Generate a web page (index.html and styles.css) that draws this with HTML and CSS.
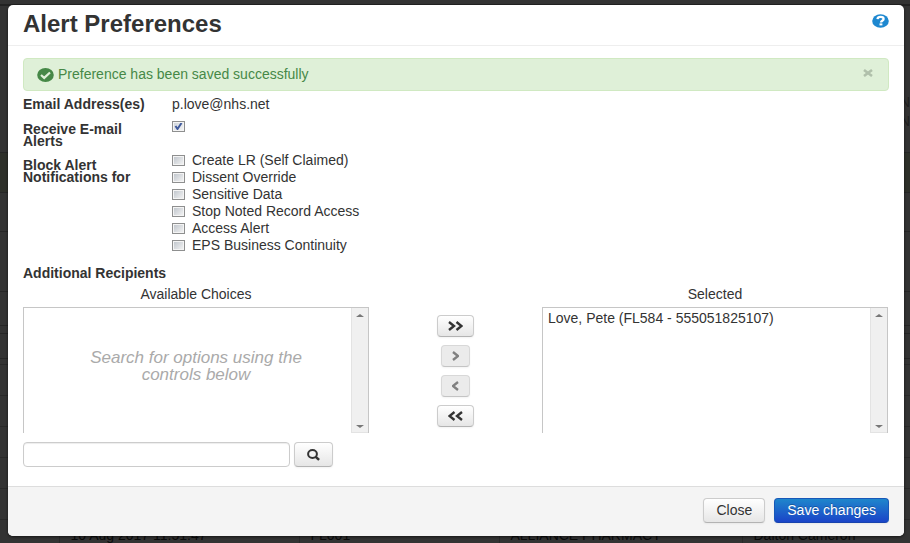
FILE: index.html
```html
<!DOCTYPE html>
<html lang="en">
<head>
  <meta charset="UTF-8">
  <meta name="viewport" content="width=device-width, initial-scale=1.0">
  <title>Alert Preferences</title>
  <link rel="stylesheet" href="styles.css">
</head>
<body>

  <!-- Page behind the dialog -->
  <div class="page-behind" aria-hidden="true">
    <div class="behind-top">
      <span>N</span>
      <span>N</span>
    </div>
    <div class="behind-notice"></div>
    <div class="behind-heading"></div>
    <div class="behind-filters"></div>
    <div class="behind-tabs"></div>
    <div class="behind-rule"></div>
    <div class="behind-tools"></div>
    <table class="alerts-table">
      <tr><td></td><td></td><td></td><td></td><td></td></tr>
      <tr><td></td><td></td><td></td><td></td><td></td></tr>
      <tr><td></td><td></td><td></td><td></td><td></td></tr>
      <tr><td></td><td></td><td></td><td></td><td></td></tr>
      <tr><td></td><td></td><td></td><td></td><td></td></tr>
      <tr>
        <td></td>
        <td>10 Aug 2017 11:51:47</td>
        <td>FL001</td>
        <td>ALLIANCE PHARMACY</td>
        <td>Dalton Cameron</td>
      </tr>
    </table>
  </div>

  <!-- Dialog -->
  <form class="modal" role="dialog" aria-labelledby="modal-title">
    <div class="modal-header">
      <h1 class="modal-title" id="modal-title">Alert Preferences</h1>
      <a class="help-link" href="#" aria-label="Help">
        <svg width="17" height="14" viewBox="0 0 17 14">
          <ellipse cx="8.5" cy="7" rx="8.3" ry="6.8" fill="#1e88d0"/>
          <path d="M5.5 5.2C5.700 3.500 7 2.900 8.600 2.900c1.700 0 3 .8 3 2.100 0 1.700-2.600 1.700-2.600 3.400" fill="none" stroke="#fff" stroke-width="2.300"/>
          <rect x="7.500" y="9.400" width="2.900" height="2" fill="#fff"/>
        </svg>
      </a>
    </div>

    <div class="modal-body">
      <div class="alert">
        <svg class="alert-icon" width="17" height="14" viewBox="0 0 17 14">
          <ellipse cx="8.5" cy="7" rx="8.3" ry="6.9" fill="#468847"/>
          <path d="M4 7l3.200 2.900L13 4.500" fill="none" stroke="#dff0d8" stroke-width="2.200"/>
        </svg>
        <span class="alert-text">Preference has been saved successfully</span>
        <button class="close" type="button" aria-label="Dismiss">
          <svg width="10" height="8" viewBox="0 0 10 8">
            <path d="M1 1l8 6M9 1L1 7" fill="none" stroke="#b0c0ab" stroke-width="2.600"/>
          </svg>
        </button>
      </div>

      <div class="field">
        <span class="field-label">Email Address(es)</span>
        <span class="field-value">p.love@nhs.net</span>
      </div>
      <div class="field">
        <label class="field-label" for="receive">Receive E-mail Alerts</label>
        <input class="check" type="checkbox" id="receive" checked>
      </div>
      <div class="field field-group" role="group" aria-labelledby="block-label">
        <span class="field-label" id="block-label">Block Alert Notifications for</span>
        <div class="options">
          <label class="option"><input class="check" type="checkbox">Create LR (Self Claimed)</label>
          <label class="option"><input class="check" type="checkbox">Dissent Override</label>
          <label class="option"><input class="check" type="checkbox">Sensitive Data</label>
          <label class="option"><input class="check" type="checkbox">Stop Noted Record Access</label>
          <label class="option"><input class="check" type="checkbox">Access Alert</label>
          <label class="option"><input class="check" type="checkbox">EPS Business Continuity</label>
        </div>
      </div>

      <h2 class="section-title">Additional Recipients</h2>
      <div class="picker">
        <div class="picker-col">
          <label class="picker-label" for="available">Available Choices</label>
          <div class="listbox">
            <select class="list" id="available" multiple></select>
            <div class="hint">Search for options using the controls below</div>
            <div class="scroll">
              <span class="arrow arrow-up"></span>
              <span class="arrow arrow-down"></span>
            </div>
          </div>
        </div>
        <div class="picker-buttons">
          <button class="btn btn-move" type="button" aria-label="Add all">
            <svg width="15" height="10" viewBox="0 0 15 10"><path d="M1 1l5 4-5 4M8.500 1l5 4-5 4"/></svg>
          </button>
          <button class="btn btn-move" type="button" aria-label="Add" disabled>
            <svg width="7" height="10" viewBox="0 0 7 10"><path d="M1 1l5 4-5 4"/></svg>
          </button>
          <button class="btn btn-move" type="button" aria-label="Remove" disabled>
            <svg width="7" height="10" viewBox="0 0 7 10"><path d="M6 1L1 5l5 4"/></svg>
          </button>
          <button class="btn btn-move" type="button" aria-label="Remove all">
            <svg width="15" height="10" viewBox="0 0 15 10"><path d="M6.500 1l-5 4 5 4M14 1L9 5l5 4"/></svg>
          </button>
        </div>
        <div class="picker-col">
          <label class="picker-label" for="selected">Selected</label>
          <div class="listbox">
            <select class="list" id="selected" multiple>
              <option>Love, Pete (FL584 - 555051825107)</option>
            </select>
            <div class="scroll">
              <span class="arrow arrow-up"></span>
              <span class="arrow arrow-down"></span>
            </div>
          </div>
        </div>
      </div>

      <div class="search">
        <input class="search-input" type="text" aria-label="Search recipients">
        <button class="btn btn-search" type="button" aria-label="Search">
          <svg width="13" height="12" viewBox="0 0 13 12">
            <ellipse cx="5.500" cy="5" rx="4.400" ry="3.900" fill="none" stroke="#333" stroke-width="2"/>
            <path d="M8.700 7.900l3.400 3" stroke="#333" stroke-width="2.600"/>
          </svg>
        </button>
      </div>
    </div>

    <div class="modal-footer">
      <button class="btn" type="button">Close</button>
      <button class="btn btn-primary" type="submit">Save changes</button>
    </div>
  </form>

</body>
</html>
```
FILE: styles.css
```css
* { box-sizing: border-box; }
body {
  margin: 0;
  padding: 5px 6px 7px 8px;
  min-height: 100vh;
  background: #333;
  color: #333;
  font-family: "Liberation Sans", Arial, sans-serif;
  font-size: 14px;
  line-height: 17px;
}

/* Page behind the dialog */
.page-behind {
  position: absolute;
  top: 0;
  left: 0;
  right: 0;
  height: 100vh;
  padding-top: 4px;
  overflow: hidden;
  color: #0c0c0c;
}
.page-behind > div { border-bottom: 1px solid #262626; }
.behind-top {
  display: flex;
  flex-direction: column;
  align-items: flex-end;
  gap: 2px;
  height: 149px;
  padding-top: 88px;
  border-top: 2px solid #222;
  color: #1f1f1f;
}
.behind-notice { height: 40px; background: #2e302a; }
.behind-heading { height: 39px; }
.behind-filters { height: 60px; }
.behind-tabs { height: 34px; }
.behind-rule { height: 8px; }
.behind-tools { height: 25px; }
.alerts-table {
  margin-top: 5px;
  width: 100%;
  table-layout: fixed;
  border-collapse: collapse;
}
.alerts-table td {
  height: 31px;
  padding: 0 11px;
  border-top: 1px solid #292929;
  border-left: 1px solid #292929;
  white-space: nowrap;
}
.alerts-table td:first-child { width: 59px; border-left: 0; }
.alerts-table td:nth-child(2) { width: 240px; }
.alerts-table td:nth-child(3) { width: 200px; }
.alerts-table td:nth-child(4) { width: 243px; }

/* Dialog */
.modal {
  position: relative;
  background: #fff;
  border-radius: 5px;
  box-shadow: 0 1px 3px rgba(0, 0, 0, 0.6);
}
.modal-header {
  display: flex;
  align-items: center;
  justify-content: space-between;
  height: 41px;
  padding: 0 15px 2px;
  border-bottom: 1px solid #eee;
}
.modal-title {
  margin: 0;
  font-size: 24px;
  line-height: 30px;
}
.help-link { display: flex; padding-bottom: 6px; }
.modal-body { padding: 12px 15px 19px; }

.alert {
  display: flex;
  align-items: center;
  gap: 4px;
  height: 33px;
  padding: 0 15px 0 13px;
  background: #dff0d8;
  border: 1px solid #d0e9c2;
  border-radius: 4px;
  color: #468847;
}
.alert-text { flex: 1; }
.close {
  display: flex;
  padding: 0 0 4px;
  border: 0;
  background: none;
}

.field {
  display: grid;
  grid-template-columns: 149px 1fr;
  align-items: start;
}
.field-label {
  width: 125px;
  padding-top: 7px;
  font-weight: bold;
  line-height: 12px;
}
.field-value { padding-top: 5px; }
.field + .field { margin-top: 3px; }
.field + .field-group { margin-top: 5px; }
.field > .check { margin-top: 5px; }
.check {
  appearance: none;
  flex: none;
  width: 13px;
  height: 11px;
  margin: 0;
  border: 1px solid #8e8f8f;
  background: linear-gradient(135deg, #bcc2c9, #f6f6f6);
  box-shadow: inset 0 0 0 1px #f4f4f4;
}
.check:checked {
  background: url("data:image/svg+xml,%3Csvg xmlns='http://www.w3.org/2000/svg' viewBox='0 0 11 9'%3E%3Cpath d='M2.500 4l2 3 4-6' fill='none' stroke='%23405a9c' stroke-width='2'/%3E%3C/svg%3E") center no-repeat, linear-gradient(135deg, #ccd2d8, #f6f6f6);
}
.options {
  display: flex;
  flex-direction: column;
  align-items: flex-start;
}
.option {
  display: flex;
  align-items: center;
  gap: 7px;
}

.section-title {
  margin: 11px 0 4px;
  font-size: 14px;
  line-height: 17px;
}
.picker {
  display: grid;
  grid-template-columns: 2fr 1fr 2fr;
  margin-right: 1px;
}
.picker-label {
  display: block;
  padding-bottom: 4px;
  text-align: center;
}
.listbox {
  position: relative;
  display: flex;
  height: 126px;
  border: 1px solid #c6c6c6;
  border-bottom: 0;
}
.list {
  flex: 1;
  min-width: 0;
  padding: 2px 3px;
  border: 0;
  outline: 0;
  background: #fff;
  color: #333;
  font: inherit;
  overflow: hidden;
}
.hint {
  position: absolute;
  top: 41px;
  left: 48px;
  right: 48px;
  color: #aaa;
  font-size: 17px;
  font-style: italic;
  text-align: center;
}
.scroll {
  display: flex;
  flex-direction: column;
  justify-content: space-between;
  align-items: center;
  width: 17px;
  padding: 6px 0 4px;
  background: #f0f0f0;
  border-left: 1px solid #e3e3e3;
  border-bottom: 1px solid #e3e3e3;
}
.arrow { border: 4px solid transparent; }
.arrow-up { border-top: 0; border-bottom: 3px solid #777; }
.arrow-down { border-bottom: 0; border-top: 3px solid #777; }
.picker-buttons {
  display: flex;
  flex-direction: column;
  align-items: center;
  gap: 8px;
  padding-top: 29px;
}

.btn {
  display: inline-flex;
  align-items: center;
  justify-content: center;
  height: 25px;
  padding: 0 12px;
  border: 1px solid #ccc;
  border-bottom-color: #b3b3b3;
  border-radius: 4px;
  background: linear-gradient(#fff, #e6e6e6);
  box-shadow: 0 1px 2px rgba(0, 0, 0, 0.05);
  color: #333;
  font: inherit;
}
.btn-move { height: 22px; padding: 0 10px; }
.btn-move path { fill: none; stroke: #333; stroke-width: 2.4; }
.btn:disabled { background: #ebebeb; border-color: #d8d8d8; border-bottom-color: #c4c4c4; }
.btn:disabled path { stroke: #808080; }
.btn-primary {
  border-color: #1758b8 #1758b8 #1743ad;
  background: linear-gradient(#1f86cc, #1a44c8);
  color: #fff;
  text-shadow: 0 -1px 0 rgba(0, 0, 0, 0.25);
}

.search {
  display: flex;
  gap: 4px;
  margin-top: 9px;
}
.search-input {
  width: 267px;
  height: 25px;
  padding: 0 6px;
  border: 1px solid #ccc;
  border-radius: 4px;
  box-shadow: inset 0 1px 1px rgba(0, 0, 0, 0.075);
  font: inherit;
}
.modal-footer {
  display: flex;
  justify-content: flex-end;
  gap: 9px;
  padding: 11px 15px 13px;
  background: #f4f4f4;
  border-top: 1px solid #ddd;
  border-radius: 0 0 5px 5px;
}
```
